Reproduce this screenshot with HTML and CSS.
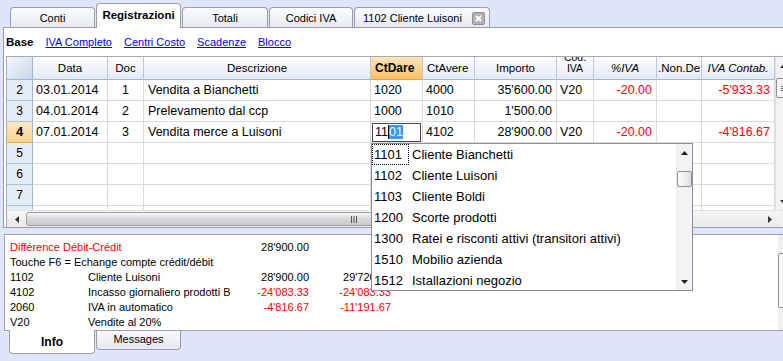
FILE: index.html
```html
<!DOCTYPE html>
<html>
<head>
<meta charset="utf-8">
<link rel="stylesheet" href="styles.css">
</head>
<body>
<div class="tabbar">
  <div class="tab w85">Conti</div>
  <div class="tab w85 active">Registrazioni</div>
  <div class="tab w86">Totali</div>
  <div class="tab w84">Codici IVA</div>
  <div class="tab w136 closable"><span>1102 Cliente Luisoni</span><span class="close"><svg width="13" height="13" viewBox="0 0 13 13"><rect x="0.5" y="0.5" width="12" height="12" rx="1.5" fill="#b4b4b8" stroke="#8e8e94"/><path d="M4 4 L9 9 M9 4 L4 9" stroke="#fff" stroke-width="2"/></svg></span></div>
</div>

<div class="main">
  <div class="subtabs">
    <b>Base</b>
    <a class="lnk">IVA Completo</a>
    <a class="lnk">Centri Costo</a>
    <a class="lnk">Scadenze</a>
    <a class="lnk">Blocco</a>
  </div>
  <div class="grid">
    <div class="grid-body">
      <div class="table">
        <div class="row head">
          <div class="c rn corner"></div>
          <div class="c hc">Data</div>
          <div class="c hc">Doc</div>
          <div class="c hc">Descrizione</div>
          <div class="c hc sel">CtDare</div>
          <div class="c hc left">CtAvere</div>
          <div class="c hc">Importo</div>
          <div class="c hc cod"><div class="codtxt">Cod.<br>IVA</div></div>
          <div class="c hc it">%IVA</div>
          <div class="c hc nond">.Non.De</div>
          <div class="c hc it">IVA Contab.</div>
        </div>
        <div class="row">
          <div class="c rn">2</div>
          <div class="c">03.01.2014</div>
          <div class="c ctr">1</div>
          <div class="c pl">Vendita a Bianchetti</div>
          <div class="c">1020</div>
          <div class="c">4000</div>
          <div class="c num">35'600.00</div>
          <div class="c">V20</div>
          <div class="c num red">-20.00</div>
          <div class="c"></div>
          <div class="c num red">-5'933.33</div>
        </div>
        <div class="row">
          <div class="c rn">3</div>
          <div class="c">04.01.2014</div>
          <div class="c ctr">2</div>
          <div class="c pl">Prelevamento dal ccp</div>
          <div class="c">1000</div>
          <div class="c">1010</div>
          <div class="c num">1'500.00</div>
          <div class="c"></div>
          <div class="c"></div>
          <div class="c"></div>
          <div class="c"></div>
        </div>
        <div class="row">
          <div class="c rn cur">4</div>
          <div class="c">07.01.2014</div>
          <div class="c ctr">3</div>
          <div class="c pl">Vendita merce a Luisoni</div>
          <div class="c edit"><span class="editbox">11<span class="selt">01</span></span></div>
          <div class="c">4102</div>
          <div class="c num">28'900.00</div>
          <div class="c">V20</div>
          <div class="c num red">-20.00</div>
          <div class="c"></div>
          <div class="c num red">-4'816.67</div>
        </div>
        <div class="row">
          <div class="c rn">5</div><div class="c"></div><div class="c"></div><div class="c"></div><div class="c"></div><div class="c"></div><div class="c"></div><div class="c"></div><div class="c"></div><div class="c"></div><div class="c"></div>
        </div>
        <div class="row">
          <div class="c rn">6</div><div class="c"></div><div class="c"></div><div class="c"></div><div class="c"></div><div class="c"></div><div class="c"></div><div class="c"></div><div class="c"></div><div class="c"></div><div class="c"></div>
        </div>
        <div class="row">
          <div class="c rn">7</div><div class="c"></div><div class="c"></div><div class="c"></div><div class="c"></div><div class="c"></div><div class="c"></div><div class="c"></div><div class="c"></div><div class="c"></div><div class="c"></div>
        </div>
        <div class="row">
          <div class="c rn"></div><div class="c"></div><div class="c"></div><div class="c"></div><div class="c"></div><div class="c"></div><div class="c"></div><div class="c"></div><div class="c"></div><div class="c"></div><div class="c"></div>
        </div>
      </div>
      <div class="vscroll">
        <div class="vs-arrow"><svg width="7" height="4" viewBox="0 0 7 4"><path d="M0 4 L3.5 0 L7 4Z" fill="#333"/></svg></div>
        <div class="vs-thumb"><svg width="7" height="7" viewBox="0 0 7 7"><path d="M0 1.5H7M0 3.5H7M0 5.5H7" stroke="#666" stroke-width="1"/></svg></div>
        <div class="vs-track"></div>
        <div class="vs-arrow"><svg width="7" height="4" viewBox="0 0 7 4"><path d="M0 0 L3.5 4 L7 0Z" fill="#333"/></svg></div>
      </div>
    </div>
    <div class="hscroll">
      <div class="hs-arrow"><svg width="4" height="7" viewBox="0 0 4 7"><path d="M4 0 L0 3.5 L4 7Z" fill="#333"/></svg></div>
      <div class="hs-thumb"><svg width="8" height="7" viewBox="0 0 8 7"><path d="M1.5 0V7M4 0V7M6.5 0V7" stroke="#555" stroke-width="1"/></svg></div>
      <div class="hs-track"></div>
      <div class="hs-arrow"><svg width="4" height="7" viewBox="0 0 4 7"><path d="M0 0 L4 3.5 L0 7Z" fill="#333"/></svg></div>
      <div class="hs-corner"></div>
    </div>
  </div>
</div>

<div class="info">
  <div class="info-grid">
    <div class="red span2">Différence Débit-Crédit</div><div class="r">28'900.00</div><div></div>
    <div class="span4">Touche F6 = Echange compte crédit/débit</div>
    <div>1102</div><div>Cliente Luisoni</div><div class="r">28'900.00</div><div class="r">29'720.00</div>
    <div>4102</div><div>Incasso giornaliero prodotti B</div><div class="r red">-24'083.33</div><div class="r red">-24'083.33</div>
    <div>2060</div><div>IVA in automatico</div><div class="r red">-4'816.67</div><div class="r red">-11'191.67</div>
    <div>V20</div><div>Vendite al 20%</div><div></div><div></div>
  </div>
  <div class="iscroll"><div class="is-thumb"></div></div>
</div>

<div class="btabs">
  <div class="btab bactive">Info</div>
  <div class="btab">Messages</div>
</div>

<div class="dropdown">
  <div class="dd-list">
    <div class="dd-item"><span class="code focus">1101</span><span>Cliente Bianchetti</span></div>
    <div class="dd-item"><span class="code">1102</span><span>Cliente Luisoni</span></div>
    <div class="dd-item"><span class="code">1103</span><span>Cliente Boldi</span></div>
    <div class="dd-item"><span class="code">1200</span><span>Scorte prodotti</span></div>
    <div class="dd-item"><span class="code">1300</span><span>Ratei e risconti attivi (transitori attivi)</span></div>
    <div class="dd-item"><span class="code">1510</span><span>Mobilio azienda</span></div>
    <div class="dd-item"><span class="code">1512</span><span>Istallazioni negozio</span></div>
  </div>
  <div class="dd-scroll">
    <div class="dd-arrow"><svg width="7" height="4" viewBox="0 0 7 4"><path d="M0 4 L3.5 0 L7 4Z" fill="#222"/></svg></div>
    <div class="dd-thumb"></div>
    <div class="dd-track"></div>
    <div class="dd-arrow"><svg width="7" height="4" viewBox="0 0 7 4"><path d="M0 0 L3.5 4 L7 0Z" fill="#222"/></svg></div>
  </div>
</div>
</body>
</html>
```

FILE: styles.css
```css
* { box-sizing: border-box; }
html, body { margin: 0; padding: 0; }
body {
  width: 783px;
  height: 361px;
  overflow: hidden;
  background: #dfe5fb;
  font-family: "Liberation Sans", Arial, sans-serif;
  color: #000;
  position: relative;
}

/* top tabs */
.tabbar {
  height: 27px;
  display: flex;
  align-items: flex-end;
  gap: 1px;
  padding-left: 10px;
}
.tab {
  height: 20px;
  border: 1px solid #9c9da8;
  border-bottom: none;
  border-radius: 4px 4px 0 0;
  background: linear-gradient(#fdfdff, #e6e9f2);
  font-size: 11px;
  display: flex;
  align-items: center;
  justify-content: center;
  padding-top: 1px;
}
.w85 { width: 85px; }
.w86 { width: 86px; }
.w84 { width: 84px; }
.w136 { width: 136px; }
.tab.active {
  height: 25px;
  margin-bottom: -1px;
  background: #fff;
  font-weight: bold;
  font-size: 11.5px;
  position: relative;
  z-index: 2;
  padding-top: 0;
  padding-bottom: 2px;
}
.closable { justify-content: flex-start; padding-left: 8px; gap: 10px; }
.close { display: flex; }

/* main panel */
.main {
  margin-left: 3px;
  width: 800px;
  height: 201px;
  border: 1px solid #9c9da8;
  border-right: none;
  background: #fff;
  position: relative;
  z-index: 1;
}
.subtabs {
  height: 28px;
  display: flex;
  align-items: center;
  gap: 12px;
  padding-left: 2px;
  font-size: 11px;
}
.subtabs b { font-weight: bold; font-size: 11.5px; }
.lnk { color: #0000ff; text-decoration: underline; }

.grid {
  margin-left: 2px;
  border-top: 1px solid #a8a8b0;
  border-left: 1px solid #a8a8b0;
  width: 790px;
}
.grid-body { display: flex; height: 153px; }
.table { width: 768px; height: 153px; overflow: hidden; flex-shrink: 0; }
.row {
  display: grid;
  grid-template-columns: 26px 75px 36px 227px 52px 52px 82px 37px 63px 45px 73px;
  height: 21px;
}
.row.head { height: 23px; }
.c {
  border-right: 1px solid #dadada;
  border-bottom: 1px solid #dadada;
  font-size: 12.5px;
  line-height: 20px;
  padding: 0 3px;
  white-space: nowrap;
  overflow: hidden;
}
.c.ctr { text-align: center; }
.c.pl { padding-left: 4px; }
.c.num { text-align: right; padding-right: 4px; }
.red { color: #ff0000; }
.c.rn {
  background: #e5edf8;
  border-right: 1px solid #9fb7d3;
  border-bottom: 1px solid #a9c0da;
  text-align: center;
  font-size: 12px;
  padding: 0;
}
.c.rn.cur {
  background: linear-gradient(#fde7c2, #fbd497);
  border-bottom: 1px solid #f2a64a;
  font-weight: bold;
  font-size: 13px;
}
.head .c {
  background: linear-gradient(#fbfcfe, #e4ebf6);
  border-right: 1px solid #b9cbe0;
  border-bottom: 1px solid #9fb5d0;
  font-size: 11.5px;
  line-height: 22px;
  text-align: center;
  padding: 0 2px;
}
.head .c.corner {
  background: linear-gradient(135deg, #f4f7fc, #c9d7ec);
  border-right: 1px solid #9fb7d3;
}
.head .c.sel {
  background: linear-gradient(#fde4ba, #f9c066);
  border-bottom: 1px solid #eea03c;
  font-weight: bold;
  font-size: 12px;
  text-align: left;
  padding-left: 4px;
}
.head .c.left { text-align: left; padding-left: 4px; }
.head .c.it { font-style: italic; }
.head .c.nond { text-align: left; padding-left: 1px; }
.head .c.cod { line-height: 11px; font-size: 10.5px; }
.codtxt { margin-top: -5px; }

.c.edit { padding: 0; }
.editbox {
  display: block;
  margin: 1px 1px 0 1px;
  height: 19px;
  border: 1px solid #4a4a4a;
  line-height: 17px;
  padding-left: 2px;
  background: #fff;
}
.selt { background: #3399ff; color: #fff; border-left: 1px solid #000; }

.vscroll {
  width: 17px;
  flex-shrink: 0;
  background: #f2f2f4;
  border-left: 1px solid #e0e0e0;
  display: flex;
  flex-direction: column;
}
.vs-arrow { height: 17px; display: flex; align-items: center; justify-content: center; padding-right: 1px; }
.vs-thumb {
  margin-top: 4px;
  height: 20px;
  border: 1px solid #8e8e94;
  border-radius: 2px;
  background: linear-gradient(90deg, #fbfbfb, #e2e2e6);
  display: flex;
  align-items: center;
  justify-content: center;
}
.vs-track { flex: 1; }

.hscroll {
  height: 17px;
  display: flex;
  background: linear-gradient(#f6f6f7, #e9e9ec);
  border-top: 1px solid #e2e2e6;
}
.hs-arrow { width: 19px; display: flex; align-items: center; justify-content: center; }
.hs-thumb {
  width: 656px;
  margin: 1px 0;
  border: 1px solid #9e9ea4;
  border-radius: 3px;
  background: linear-gradient(#f6f6f7, #dadadd 45%, #c9c9cd);
  display: flex;
  align-items: center;
  justify-content: center;
}
.hs-track { flex: 1; }
.hs-corner { width: 17px; background: #f0f0f2; }

/* info panel */
.info {
  margin: 6px 0 0 4px;
  width: 791px;
  height: 97px;
  border: 1px solid #a0a1ab;
  border-right: none;
  background: #fff;
  display: flex;
}
.info-grid {
  flex: 1;
  display: grid;
  grid-template-columns: 78px 140px 81px 82px;
  grid-auto-rows: 15px;
  align-content: start;
  padding: 5px 0 0 5px;
  font-size: 11px;
  line-height: 15px;
  white-space: nowrap;
}
.info-grid .r { text-align: right; }
.span2 { grid-column: span 2; }
.span4 { grid-column: span 4; }
.iscroll {
  width: 17px;
  background: #f0f0f2;
  padding-top: 18px;
}
.is-thumb {
  height: 55px;
  border: 1px solid #8e8e94;
  border-radius: 2px;
  background: linear-gradient(90deg, #fbfbfb, #e4e4e8);
}

/* bottom tabs */
.btabs {
  display: flex;
  gap: 1px;
  padding-left: 9px;
  margin-top: -1px;
  align-items: flex-start;
}
.btab {
  width: 85px;
  height: 19px;
  border: 1px solid #9c9da8;
  border-top: none;
  border-radius: 0 0 4px 4px;
  background: linear-gradient(#f9f9fc, #e6e8f0);
  font-size: 11px;
  display: flex;
  align-items: center;
  justify-content: center;
  margin-top: 1px;
  padding-bottom: 2px;
}
.btab.bactive {
  width: 86px;
  height: 24px;
  margin-top: 0;
  background: #fff;
  font-weight: bold;
  font-size: 12px;
  padding-top: 2px;
}

/* dropdown */
.dropdown {
  position: absolute;
  left: 371px;
  top: 143px;
  width: 322px;
  height: 148px;
  border: 1px solid #8b8d98;
  background: #fff;
  display: flex;
  z-index: 5;
}
.dd-list { flex: 1; }
.dd-item {
  height: 21px;
  display: flex;
  align-items: center;
  font-size: 13px;
  white-space: nowrap;
}
.code { width: 40px; padding-left: 2px; flex-shrink: 0; height: 21px; line-height: 21px; }
.code.focus { outline: 1px dotted #000; outline-offset: -1px; width: 37px; margin-right: 3px; }
.dd-scroll {
  width: 16px;
  background: #f4f2f5;
  border-left: 1px solid #ecebee;
  display: flex;
  flex-direction: column;
}
.dd-arrow { height: 17px; display: flex; align-items: center; justify-content: center; }
.dd-thumb {
  margin: 10px 0 0 0;
  height: 16px;
  border: 1px solid #8e8e94;
  border-radius: 2px;
  background: linear-gradient(90deg, #fdfdfd, #e0e0e4);
}
.dd-track { flex: 1; }
```
